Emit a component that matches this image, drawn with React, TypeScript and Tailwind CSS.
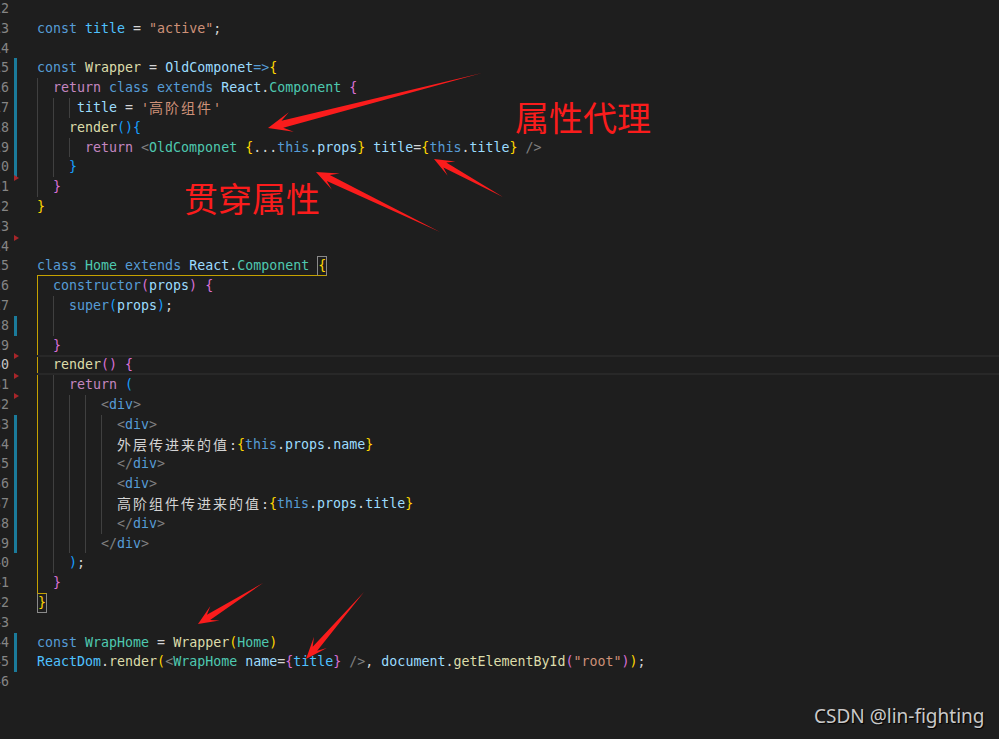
import React from "react";

const K = "#569cd6";
const C = "#4fc1ff";
const V = "#9cdcfe";
const F = "#dcdcaa";
const S = "#ce9178";
const T = "#4ec9b0";
const R = "#c586c0";
const P = "#d4d4d4";
const G = "#808080";
const Y = "#ffd700";
const M = "#da70d6";
const B = "#179fff";

type Tok = [string, string] | [string, string, string];
type Seg = [number, "g" | "y"];
type Line = {
  n: number;
  ind?: Seg[];
  tk?: Tok[];
  mod?: boolean;
  del?: boolean;
  cur?: boolean;
  special?: "open" | "close";
};

const g2: Seg = [2, "g"];
const y2: Seg = [2, "y"];

const lines: Line[] = [
  { n: 12 },
  { n: 13, tk: [["const", K], [" ", P], ["title", C], [" = ", P], ['"active"', S], [";", P]] },
  { n: 14 },
  {
    n: 15,
    mod: true,
    tk: [["const", K], [" ", P], ["Wrapper", F], [" = ", P], ["OldComponet", V], ["=>", K], ["{", Y]],
  },
  {
    n: 16,
    mod: true,
    ind: [g2],
    tk: [["return", R], [" ", P], ["class", K], [" ", P], ["extends", K], [" ", P], ["React", V], [".", P], ["Component", T], [" ", P], ["{", M]],
  },
  { n: 17, mod: true, ind: [g2, g2, [1, "g"]], tk: [["title", V], [" = ", P], ["'高阶组件'", S]] },
  { n: 18, mod: true, ind: [g2, g2], tk: [["render", F], ["(){", B]] },
  {
    n: 19,
    mod: true,
    ind: [g2, g2, g2],
    tk: [
      ["return", R], [" ", P], ["<", G], ["OldComponet", T], [" ", P], ["{", Y], ["...", P], ["this", K], [".", P], ["props", V], ["}", Y],
      [" ", P], ["title", V], ["=", P], ["{", Y], ["this", K], [".", P], ["title", V], ["}", Y], [" ", P], ["/>", G],
    ],
  },
  { n: 20, mod: true, ind: [g2, g2], tk: [["}", B]] },
  { n: 21, del: true, ind: [g2], tk: [["}", M]] },
  { n: 22, tk: [["}", Y]] },
  { n: 23 },
  { n: 24, del: true },
  { n: 25, special: "open" },
  { n: 26, ind: [y2], tk: [["constructor", K], ["(", M], ["props", V], [")", M], [" ", P], ["{", M]] },
  { n: 27, ind: [y2, g2], tk: [["super", K], ["(", B], ["props", V], [")", B], [";", P]] },
  { n: 28, mod: true, ind: [y2, g2] },
  { n: 29, ind: [y2], tk: [["}", M]] },
  { n: 30, del: true, cur: true, ind: [y2], tk: [["render", F], ["()", M], [" ", P], ["{", M]] },
  { n: 31, del: true, ind: [y2, g2], tk: [["return", R], [" ", P], ["(", B]] },
  { n: 32, del: true, ind: [y2, g2, g2, g2], tk: [["<", G], ["div", K], [">", G]] },
  { n: 33, mod: true, ind: [y2, g2, g2, g2, g2], tk: [["<", G], ["div", K], [">", G]] },
  {
    n: 34,
    mod: true,
    ind: [y2, g2, g2, g2, g2],
    tk: [["外层传进来的值:", P], ["{", Y], ["this", K], [".", P], ["props", V], [".", P], ["name", V], ["}", Y]],
  },
  { n: 35, mod: true, ind: [y2, g2, g2, g2, g2], tk: [["</", G], ["div", K], [">", G]] },
  { n: 36, mod: true, ind: [y2, g2, g2, g2, g2], tk: [["<", G], ["div", K], [">", G]] },
  {
    n: 37,
    mod: true,
    ind: [y2, g2, g2, g2, g2],
    tk: [["高阶组件传进来的值:", P], ["{", Y], ["this", K], [".", P], ["props", V], [".", P], ["title", V], ["}", Y]],
  },
  { n: 38, mod: true, ind: [y2, g2, g2, g2, g2], tk: [["</", G], ["div", K], [">", G]] },
  { n: 39, mod: true, ind: [y2, g2, g2, g2], tk: [["</", G], ["div", K], [">", G]] },
  { n: 40, ind: [y2, g2], tk: [[")", B], [";", P]] },
  { n: 41, ind: [y2], tk: [["}", M]] },
  { n: 42, special: "close" },
  { n: 43 },
  {
    n: 44,
    mod: true,
    tk: [["const", K], [" ", P], ["WrapHome", T], [" = ", P], ["Wrapper", F], ["(", Y], ["Home", T], [")", Y]],
  },
  {
    n: 45,
    mod: true,
    tk: [
      ["ReactDom", C], [".", P], ["render", F], ["(", Y], ["<", G], ["WrapHome", T], [" ", P], ["name", V], ["=", P], ["{", M], ["title", C], ["}", M],
      [" ", P], ["/>", G], [", ", P], ["document", V], [".", P], ["getElementById", F], ["(", M], ['"root"', S], [")", M], [")", Y], [";", P],
    ],
  },
  { n: 46 },
];

const cjkRe = /([\u3400-\u9fff]+)/;

function Text({ text, color }: { text: string; color: string }) {
  const parts = text.split(cjkRe).filter((p) => p.length > 0);
  return (
    <span style={{ color }}>
      {parts.map((p, i) =>
        cjkRe.test(p) ? (
          <span
            key={i}
            className="font-['Noto_Sans_CJK_SC',sans-serif] text-[14px] tracking-[2px]"
          >
            {p}
          </span>
        ) : (
          <span key={i}>{p}</span>
        )
      )}
    </span>
  );
}

function Indent({ segs }: { segs: Seg[] }) {
  return (
    <>
      {segs.map(([w, c], i) => (
        <span
          key={i}
          className={
            "inline-block h-[19.8px] shrink-0 border-l " +
            (w === 2 ? "w-[16px] " : "w-[8px] ") +
            (c === "y" ? "border-[#c5a100]" : "border-[#404040]")
          }
        />
      ))}
    </>
  );
}

function CodeLine({ l }: { l: Line }) {
  return (
    <div className="flex h-[19.8px] leading-[19.8px]">
      <div
        className={
          "w-[40px] -ml-[31px] shrink-0 text-right " + (l.cur ? "text-[#c6c6c6]" : "text-[#858585]")
        }
      >
        {l.n}
      </div>
      <div className="relative flex w-[28px] shrink-0">
        {l.mod && <div className="ml-[5px] h-full w-[3px] bg-[#1b7b9b]" />}
        {l.del && (
          <div className="absolute left-[5px] top-[-2px] h-0 w-0 border-y-[3.5px] border-l-[5px] border-y-transparent border-l-[#a7262a]" />
        )}
      </div>
      <div className="relative flex flex-1 whitespace-pre">
        {l.cur && <div className="pointer-events-none absolute inset-0 border-y-2 border-[#282828]" />}
        {l.ind && <Indent segs={l.ind} />}
        {l.special === "open" && (
          <>
            <span className="inline-block h-[19.8px] border-b border-[#c5a100]">
              <Text text="class" color={K} />
              <Text text=" " color={P} />
              <Text text="Home" color={T} />
              <Text text=" " color={P} />
              <Text text="extends" color={K} />
              <Text text=" " color={P} />
              <Text text="React" color={V} />
              <Text text="." color={P} />
              <Text text="Component" color={T} />
              <Text text=" " color={P} />
            </span>
            <span className="inline-block h-[19.8px] border border-[#8a8a8a] border-b-[#c5a100] leading-[17.8px]">
              <Text text="{" color={Y} />
            </span>
          </>
        )}
        {l.special === "close" && (
          <span className="inline-block h-[19.8px] border border-[#8a8a8a] border-t-[#c5a100] leading-[17.8px]">
            <Text text="}" color={Y} />
          </span>
        )}
        {l.tk && l.tk.map((t, i) => <Text key={i} text={t[0]} color={t[1]} />)}
      </div>
    </div>
  );
}

function arrow(x1: number, y1: number, x2: number, y2: number, head = 22, hw = 9, sw = 3.4) {
  const dx = x2 - x1;
  const dy = y2 - y1;
  const L = Math.hypot(dx, dy);
  const ux = dx / L;
  const uy = dy / L;
  const nx = -uy;
  const ny = ux;
  const at = (d: number, o: number) => [x1 + ux * d + nx * o, y1 + uy * d + ny * o];
  const pts = [
    [x1, y1],
    at(L - head * 0.62, sw),
    at(L - head, hw),
    [x2, y2],
    at(L - head, -hw),
    at(L - head * 0.62, -sw),
  ];
  return pts.map((p) => p[0].toFixed(1) + "," + p[1].toFixed(1)).join(" ");
}

export default function App() {
  return (
    <div className="relative h-[739px] w-[999px] overflow-hidden bg-[#1e1e1e] font-['DejaVu_Sans_Mono',monospace] text-[13.3px]">
      <div className="-mt-[1px] flex flex-col">
        {lines.map((l) => (
          <CodeLine key={l.n} l={l} />
        ))}
      </div>

      <svg className="pointer-events-none absolute inset-0" width="999" height="739">
        <polygon points={arrow(482, 73, 268, 128, 24, 10, 3.6)} fill="#fa1c1c" />
        <polygon points={arrow(440, 232, 316, 172, 22, 9, 3.4)} fill="#fa1c1c" />
        <polygon points={arrow(503, 197, 434, 159, 20, 8, 3)} fill="#fa1c1c" />
        <polygon points={arrow(263, 583, 198, 624, 20, 8.5, 3)} fill="#fa1c1c" />
        <polygon points={arrow(364, 592, 306, 659, 22, 8.5, 3)} fill="#fa1c1c" />
      </svg>

      <div className="absolute left-[515px] top-[100px] font-['Noto_Sans_CJK_SC',sans-serif] text-[34px] leading-none text-[#fa1c1c]">
        属性代理
      </div>
      <div className="absolute left-[184px] top-[181px] font-['Noto_Sans_CJK_SC',sans-serif] text-[34px] leading-none text-[#fa1c1c]">
        贯穿属性
      </div>

      <div className="absolute left-[814px] top-[707px] font-['Noto_Sans',sans-serif] text-[19px] leading-none text-[#c9c9c9] [text-shadow:1px_1px_1px_#000]">
        CSDN @lin-fighting
      </div>
    </div>
  );
}
